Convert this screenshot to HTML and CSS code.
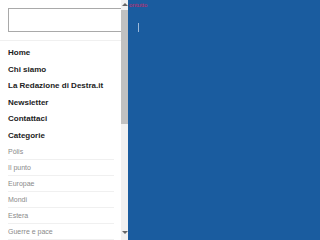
FILE: index.html
```html
<!DOCTYPE html>
<html lang="it">
<head>
    <meta charset="UTF-8">
    <meta name="viewport" content="width=device-width, initial-scale=1.0">
    <title>Destra.it</title>
    <link rel="stylesheet" href="styles.css">
</head>
<body>
    <div class="page">
        <aside class="side">
            <div class="side-content">
                <div class="search">
                    <input type="text" class="search-input">
                </div>
                <ul class="menu">
                    <li>Home</li>
                    <li>Chi siamo</li>
                    <li>La Redazione di Destra.it</li>
                    <li>Newsletter</li>
                    <li>Contattaci</li>
                    <li>Categorie</li>
                </ul>
                <ul class="sub-menu">
                    <li>Pòlis</li>
                    <li>Il punto</li>
                    <li>Europae</li>
                    <li>Mondi</li>
                    <li>Estera</li>
                    <li>Guerre e pace</li>
                </ul>
            </div>
            <div class="scrollbar">
                <div class="arrow-up"></div>
                <div class="thumb"></div>
                <div class="track"></div>
                <div class="arrow-down"></div>
            </div>
        </aside>
        <main class="main">
            <a class="skip-link">ontutto</a>
            <div class="caret"></div>
        </main>
    </div>
</body>
</html>
```
FILE: styles.css
```css
body {
    margin: 0;
    padding: 0;
    font-family: "Liberation Sans", Arial, sans-serif;
    background-color: #1a5c9f;
}
.page {
    display: flex;
    width: 320px;
    height: 240px;
    overflow: hidden;
}
.side {
    display: flex;
    width: 128px;
    height: 240px;
    background-color: white;
    flex-shrink: 0;
}
.side-content {
    width: 121px;
    overflow: hidden;
}
.search {
    padding: 8px 0 8px 8px;
    border-bottom: 1px solid #f0f0f0;
}
.search-input {
    display: block;
    width: 130px;
    height: 24px;
    box-sizing: border-box;
    border: 1px solid #a9a9a9;
    border-right: none;
    margin: 0;
    padding: 0;
}
.menu {
    list-style: none;
    margin: 4px 0 0;
    padding: 0 0 0 8px;
}
.menu li {
    height: 16.5px;
    line-height: 16.5px;
    font-size: 8px;
    font-weight: bold;
    color: #222;
    white-space: nowrap;
}
.sub-menu {
    list-style: none;
    margin: 0;
    padding: 0 7px 0 8px;
}
.sub-menu li {
    height: 15px;
    line-height: 15px;
    font-size: 7px;
    color: #8a8a8a;
    border-bottom: 1px solid #f0f0f0;
    white-space: nowrap;
}
.scrollbar {
    display: flex;
    flex-direction: column;
    width: 7px;
    background-color: #f1f1f1;
}
.arrow-up,
.arrow-down {
    height: 8px;
    display: flex;
    align-items: center;
    justify-content: center;
}
.arrow-down {
    margin-bottom: 4px;
}
.arrow-up::after {
    content: "";
    border-left: 3px solid transparent;
    border-right: 3px solid transparent;
    border-bottom: 3px solid #666;
}
.arrow-down::after {
    content: "";
    border-left: 3px solid transparent;
    border-right: 3px solid transparent;
    border-top: 3px solid #666;
}
.thumb {
    height: 114px;
    margin-top: 2px;
    background-color: #c1c1c1;
}
.track {
    flex: 1;
}
.main {
    flex: 1;
    display: flex;
    flex-direction: column;
    padding: 2px 0 0 1px;
}
.skip-link {
    font-size: 6px;
    color: #d0286a;
    line-height: 7px;
}
.caret {
    width: 1px;
    height: 9px;
    margin: 14px 0 0 9px;
    background-color: #9db9da;
}
```
